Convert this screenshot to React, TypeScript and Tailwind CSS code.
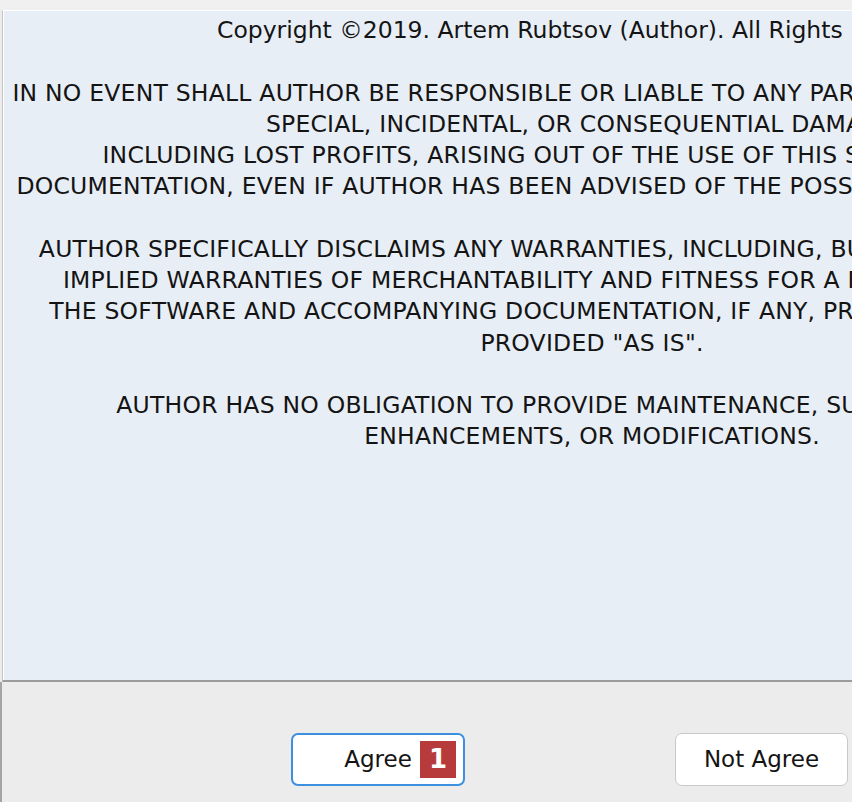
const lines = [
  "Copyright ©2019. Artem Rubtsov (Author). All Rights Reserved.",
  "",
  "IN NO EVENT SHALL AUTHOR BE RESPONSIBLE OR LIABLE TO ANY PARTY FOR DIRECT, INDIRECT,",
  "SPECIAL, INCIDENTAL, OR CONSEQUENTIAL DAMAGES,",
  "INCLUDING LOST PROFITS, ARISING OUT OF THE USE OF THIS SOFTWARE AND ITS",
  "DOCUMENTATION, EVEN IF AUTHOR HAS BEEN ADVISED OF THE POSSIBILITY OF SUCH DAMAGE.",
  "",
  "AUTHOR SPECIFICALLY DISCLAIMS ANY WARRANTIES, INCLUDING, BUT NOT LIMITED TO, THE",
  "IMPLIED WARRANTIES OF MERCHANTABILITY AND FITNESS FOR A PARTICULAR PURPOSE.",
  "THE SOFTWARE AND ACCOMPANYING DOCUMENTATION, IF ANY, PROVIDED HEREUNDER IS",
  'PROVIDED "AS IS".',
  "",
  "AUTHOR HAS NO OBLIGATION TO PROVIDE MAINTENANCE, SUPPORT, UPDATES,",
  "ENHANCEMENTS, OR MODIFICATIONS.",
];

export default function App() {
  return (
    <div className="w-[852px] h-[802px] overflow-hidden bg-[#ececec] flex flex-col font-['DejaVu_Sans',sans-serif] text-[#141414]">
      {/* strip above the licence box */}
      <div className="h-[10px] bg-[#f0f0f0] shrink-0" />

      {/* licence text */}
      <div className="ml-[2px] w-[1178px] h-[672px] shrink-0 border-l border-t border-l-[#c4c4c4] border-t-white border-b-2 border-b-[#9c9c9c] bg-[#e8eef6]">
        <div className="h-full border-l border-white pt-[4px] text-center text-[23.5px] leading-[31.25px] whitespace-pre">
          {lines.map((line, i) => (
            <div key={i} className={i === 0 ? "h-[31.25px]" : "h-[31.25px] tracking-[0.22px]"}>
              {line}
            </div>
          ))}
        </div>
      </div>

      {/* buttons */}
      <div className="flex-1 border-l-2 border-[#a4a4a4] pt-[51px]">
        <div className="flex ml-[289px] gap-[210px]">
          <button className="relative w-[174px] h-[53px] rounded-[7px] border-2 border-[#3d8fe0] bg-white text-[23px] flex items-center justify-center">
            Agree
            <span className="absolute right-[7px] top-[6px] w-[36px] h-[37px] bg-[#b83b3b] text-white font-bold text-[26px] leading-[37px] text-center">
              1
            </span>
          </button>
          <button className="w-[173px] h-[53px] rounded-[7px] border border-[#c9c9c9] bg-white text-[23px] flex items-center justify-center">
            Not Agree
          </button>
        </div>
      </div>
    </div>
  );
}
